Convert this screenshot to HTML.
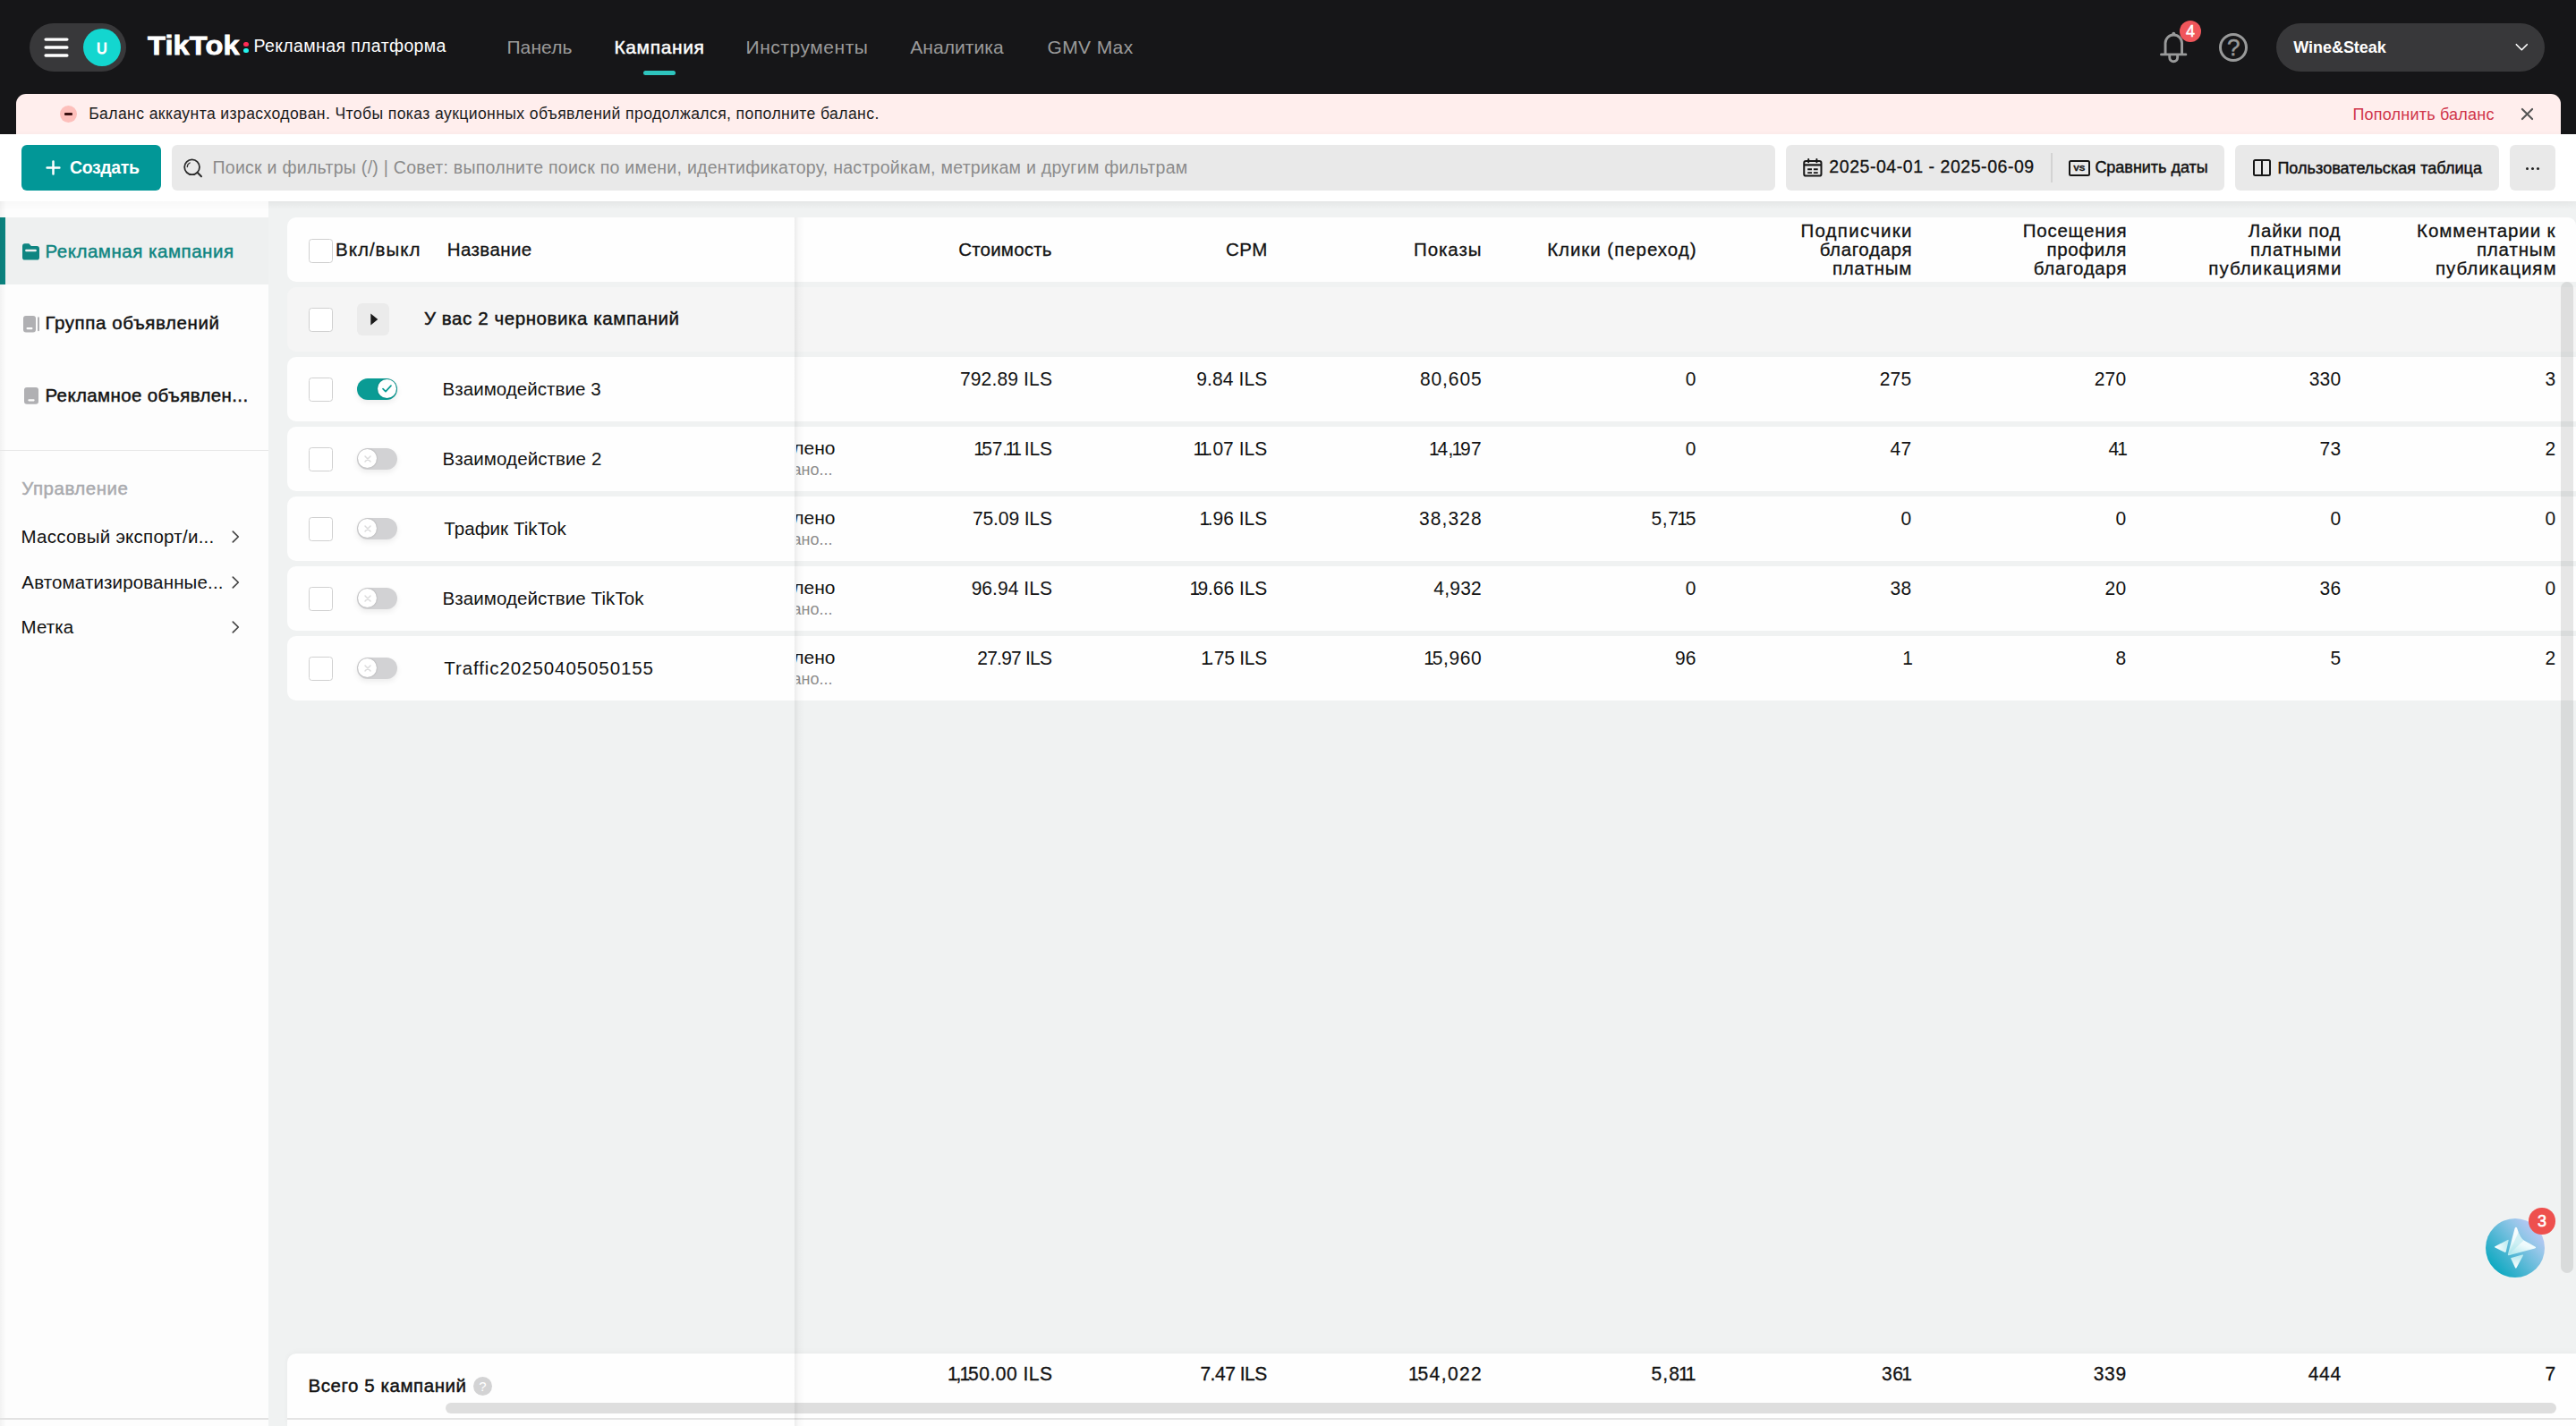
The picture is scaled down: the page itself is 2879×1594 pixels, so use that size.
<!DOCTYPE html>
<html lang="ru">
<head>
<meta charset="utf-8">
<title>TikTok: Рекламная платформа — Кампания</title>
<style>
*{box-sizing:border-box;margin:0;padding:0}
html,body{width:2879px;height:1594px;overflow:hidden}
body{position:relative;background:#f0f2f2;font-family:"Liberation Sans",sans-serif;color:#121212}
.a{position:absolute}
.t{position:absolute;white-space:nowrap;line-height:1;font-kerning:normal}
svg{position:absolute;overflow:visible}
.nav{left:0;top:0;width:2879px;height:150px;background:#161618}
.pill{background:#38383a;border-radius:27px;height:54px;top:26px}
.alert{left:18px;top:105px;width:2844px;height:45px;background:#ffeeed;border-radius:11px 11px 0 0}
.bar{left:0;top:150px;width:2879px;height:75px;background:#fff;box-shadow:0 2px 8px rgba(0,0,0,.045)}
.btn{top:162px;height:51px;border-radius:6px;background:#e9e9e9}
.side{left:0;top:225px;width:300px;height:1369px;background:#fdfdfd}
.row{left:321px;width:2558px;height:71.5px;background:#fefefe;border-radius:10px 0 0 10px}
.cb{left:345px;width:27px;height:27px;border:1.5px solid #d0d0d0;border-radius:3.5px;background:#fff}
.tg{left:398.75px;width:45px;height:24px;border-radius:12px;box-shadow:0 3px 6px rgba(0,0,0,.07)}
.tg.on{background:#0a9b94}
.tg.off{background:#d2d2d4}
.kn{position:absolute;top:1.5px;width:21px;height:21px;border-radius:50%;background:#fff;box-shadow:0 0 2px rgba(0,0,0,.25)}
.t i{font-style:normal;margin:0 -2.6px 0 -2.3px}
.clip{left:890.3px;width:67.7px;height:60px;overflow:hidden}
</style>
</head>
<body>
<!-- top navigation -->
<div class="a nav"></div>
<div class="a pill" style="left:33px;width:107.5px"></div>
<svg style="left:40px;top:34px" width="50" height="40" viewBox="40 34 50 40"><path d="M51.1 44.1H74.9M51.1 53H74.9M51.1 62H74.9" stroke="#fff" stroke-width="3.4" stroke-linecap="round" fill="none"/></svg>
<div class="a" style="left:93px;top:32px;width:42px;height:42px;border-radius:50%;background:#13d6cf"></div>
<span class="t" style="left:107.9px;top:46.1px;font-size:16.2px;color:#fff;-webkit-text-stroke:1px #fff">U</span>
<div class="a" style="left:272.2px;top:46.6px;width:5.4px;height:5.4px;border-radius:50%;background:#fe2c55"></div>
<div class="a" style="left:272.2px;top:53.8px;width:5.4px;height:5.4px;border-radius:50%;background:#25f4ee"></div>
<div class="a" style="left:719px;top:78.8px;width:36px;height:5.6px;border-radius:3px;background:#2ec4bd"></div>
<!-- bell -->
<svg style="left:2400px;top:14px" width="60" height="70" viewBox="2400 14 60 70"><path d="M2415.5 60.9H2442.9M2420.05 60.5V48.3A9.25 9.25 0 0 1 2438.55 48.3V60.5M2424.75 62.4V64.3A4.45 4.45 0 0 0 2433.65 64.3V62.4" stroke="#999a9a" stroke-width="2.9" fill="none" stroke-linecap="round"/><circle cx="2429.3" cy="37.6" r="1.9" fill="#999a9a"/></svg>
<div class="a" style="left:2436.05px;top:22.75px;width:24.1px;height:24.1px;border-radius:50%;background:#f0565b"></div>
<span class="t" style="left:2443.1px;top:25.6px;font-size:18px;color:#fff;-webkit-text-stroke:.5px #fff">4</span>
<!-- help -->
<div class="a" style="left:2480.1px;top:37px;width:32px;height:32px;border-radius:50%;border:3px solid #999a9a"></div>
<span class="t" style="left:2488.9px;top:40.4px;font-size:26px;color:#999a9a;-webkit-text-stroke:.5px #999a9a">?</span>
<div class="a pill" style="left:2543.7px;width:300.5px"></div>
<svg style="left:2810px;top:48px" width="16" height="10" viewBox="0 0 16 10"><path d="M2.3 1.7L8.3 7.7L14.3 1.7" stroke="#fff" stroke-width="1.6" fill="none" stroke-linecap="round" stroke-linejoin="round"/></svg>
<!-- alert banner -->
<div class="a alert"></div>
<div class="a" style="left:67px;top:118px;width:19px;height:19px;border-radius:50%;background:#fdbfbb"></div>
<div class="a" style="left:72.3px;top:126.4px;width:8.4px;height:2.2px;background:#3a1010;border-radius:1px"></div>
<svg style="left:2817px;top:120px" width="15" height="15" viewBox="0 0 15 15"><path d="M1.9 1.9L13.1 13.1M13.1 1.9L1.9 13.1" stroke="#555" stroke-width="2.1" stroke-linecap="round"/></svg>
<!-- toolbar -->
<div class="a bar"></div>
<div class="a btn" style="left:24px;width:156px;background:#029797"></div>
<svg style="left:51.4px;top:179.3px" width="17" height="17" viewBox="0 0 17 17"><path d="M8.5 1.6V15.4M1.6 8.5H15.4" stroke="#fff" stroke-width="2.5" stroke-linecap="round"/></svg>
<div class="a btn" style="left:192px;width:1792px"></div>
<svg style="left:204px;top:176px" width="24" height="24" viewBox="0 0 24 24"><circle cx="10.6" cy="10.8" r="8.4" stroke="#2b2b2b" stroke-width="1.8" fill="none"/><path d="M16.8 17L21 21.2" stroke="#2b2b2b" stroke-width="2" stroke-linecap="round"/><path d="M5.3 10.6A5.2 5.2 0 0 1 8.2 6" stroke="#2b2b2b" stroke-width="1.3" fill="none" stroke-linecap="round"/></svg>
<div class="a btn" style="left:1996px;width:490px"></div>
<!-- calendar -->
<svg style="left:2010px;top:172px" width="32" height="30" viewBox="2010 172 32 30"><rect x="2016.25" y="180" width="19.25" height="16.6" rx="2.2" stroke="#161616" stroke-width="2" fill="none"/><path d="M2016 184.4H2036" stroke="#161616" stroke-width="2.2"/><path d="M2021.2 178V181.2M2030.4 178V181.2" stroke="#161616" stroke-width="2" stroke-linecap="round"/><path d="M2020.2 189.2H2025M2026.9 189.2H2031.7M2020.2 193.1H2025M2026.9 193.1H2031.7" stroke="#161616" stroke-width="1.9"/></svg>
<div class="a" style="left:2292px;top:171px;width:1.5px;height:33px;background:#d3d3d3"></div>
<!-- vs -->
<div class="a" style="left:2312px;top:178.9px;width:23.8px;height:18px;border:2px solid #161616;border-radius:2.5px"></div>
<span class="t" style="left:2317.2px;top:183.2px;font-size:9.8px;font-weight:700;color:#161616;letter-spacing:0;-webkit-text-stroke:.35px #161616">VS</span>
<div class="a btn" style="left:2498px;width:295px"></div>
<div class="a" style="left:2518.3px;top:178.3px;width:19.6px;height:19.2px;border:2.1px solid #161616;border-radius:2.5px"></div>
<div class="a" style="left:2527.1px;top:178.3px;width:2.1px;height:19.2px;background:#161616"></div>
<div class="a btn" style="left:2805px;width:51px"></div>
<div class="a" style="left:2823.3px;top:186.6px;width:3px;height:3px;border-radius:50%;background:#222;box-shadow:6px 0 0 #222,12px 0 0 #222"></div>
<!-- sidebar -->
<div class="a side"></div>
<div class="a" style="left:0;top:225px;width:2879px;height:10px;background:linear-gradient(rgba(0,0,0,.02),rgba(0,0,0,0))"></div>
<div class="a" style="left:0;top:243px;width:300px;height:74.5px;background:#eef0f0"></div>
<div class="a" style="left:0;top:243px;width:6px;height:74.5px;background:#0b8480"></div>
<div class="a" style="left:0;top:225px;width:7px;height:1369px;background:linear-gradient(90deg,rgba(0,0,0,.045),rgba(0,0,0,0))"></div>
<!-- folder icon -->
<svg style="left:25px;top:271.5px" width="19" height="19" viewBox="0 0 19 19"><path d="M0 3.2Q0 0.3 2.9 0.3H7.3L9.9 3.1H16.1Q19 3.1 19 6V15.7Q19 18.6 16.1 18.6H2.9Q0 18.6 0 15.7Z" fill="#0e8581"/><rect x="3.2" y="6.8" width="12.6" height="2.4" rx="1" fill="#eef0f0"/></svg>
<svg style="left:26px;top:352.5px" width="19" height="19" viewBox="0 0 19 19"><rect x="0" y="0" width="14" height="18.4" rx="3" fill="#b0b0b3"/><rect x="3.6" y="13" width="6.8" height="2.2" rx="0.8" fill="#fdfdfd"/><rect x="16" y="1.2" width="2" height="16" rx="1" fill="#b0b0b3"/></svg>
<svg style="left:26.5px;top:433px" width="17" height="19" viewBox="0 0 17 19"><rect x="0" y="0" width="16" height="18.8" rx="3" fill="#b0b0b3"/><rect x="4.4" y="13.2" width="7.2" height="2.2" rx="0.8" fill="#fdfdfd"/></svg>
<div class="a" style="left:0;top:503.2px;width:300px;height:1.3px;background:#e7e7e7"></div>
<svg style="left:259px;top:593px" width="9" height="14" viewBox="0 0 9 14"><path d="M1.3 1.2L7.3 7L1.3 12.8" stroke="#444" stroke-width="1.7" fill="none" stroke-linecap="round" stroke-linejoin="round"/></svg>
<svg style="left:259px;top:643.8px" width="9" height="14" viewBox="0 0 9 14"><path d="M1.3 1.2L7.3 7L1.3 12.8" stroke="#444" stroke-width="1.7" fill="none" stroke-linecap="round" stroke-linejoin="round"/></svg>
<svg style="left:259px;top:694.3px" width="9" height="14" viewBox="0 0 9 14"><path d="M1.3 1.2L7.3 7L1.3 12.8" stroke="#444" stroke-width="1.7" fill="none" stroke-linecap="round" stroke-linejoin="round"/></svg>
<div class="a" style="left:0;top:1585.4px;width:300px;height:1.4px;background:#e2e2e2"></div>
<!-- table header -->
<div class="a" style="left:321px;top:243px;width:2558px;height:72px;background:#fefefe;border-radius:10px 9px 0 10px"></div>
<!-- draft row -->
<div class="a row" style="top:321.2px;height:71.6px;background:#f5f5f5"></div>
<div class="a cb" style="top:267px"></div>
<div class="a cb" style="top:343.5px"></div>
<div class="a" style="left:399px;top:339px;width:36px;height:36px;border-radius:6px;background:#ebebeb"></div>
<svg style="left:414px;top:350px" width="9" height="14" viewBox="0 0 9 14"><path d="M0.3 0.4L8.3 7L0.3 13.6Z" fill="#1a1a1a"/></svg>
<div class="a row" style="top:399.25px"></div>
<div class="a cb" style="top:421.75px"></div>
<div class="a tg on" style="top:422.85px"><div class="kn" style="left:23px"></div><svg style="left:28.3px;top:7.4px" width="11" height="9" viewBox="0 0 11 9"><path d="M1 4.6L4 7.6L10 1.2" stroke="#0a9b94" stroke-width="1.7" fill="none" stroke-linecap="round" stroke-linejoin="round"/></svg></div>
<div class="a row" style="top:477.25px"></div>
<div class="a cb" style="top:499.75px"></div>
<div class="a tg off" style="top:500.85px"><div class="kn" style="left:1.5px"></div><svg style="left:8.2px;top:8.2px" width="8" height="8" viewBox="0 0 8 8"><path d="M1 1L7 7M7 1L1 7" stroke="#dcdcdd" stroke-width="1.5" stroke-linecap="round"/></svg></div>
<div class="a clip" style="top:477.25px"><span class="t" style="right:24.5px;top:13.22px;font-size:21px">Приостановлено</span><span class="t" style="right:27.5px;top:38.76px;font-size:18px;color:#8c8c8c">Кампания приостано...</span></div>
<div class="a row" style="top:555.25px"></div>
<div class="a cb" style="top:577.75px"></div>
<div class="a tg off" style="top:578.85px"><div class="kn" style="left:1.5px"></div><svg style="left:8.2px;top:8.2px" width="8" height="8" viewBox="0 0 8 8"><path d="M1 1L7 7M7 1L1 7" stroke="#dcdcdd" stroke-width="1.5" stroke-linecap="round"/></svg></div>
<div class="a clip" style="top:555.25px"><span class="t" style="right:24.5px;top:13.22px;font-size:21px">Приостановлено</span><span class="t" style="right:27.5px;top:38.76px;font-size:18px;color:#8c8c8c">Кампания приостано...</span></div>
<div class="a row" style="top:633.25px"></div>
<div class="a cb" style="top:655.75px"></div>
<div class="a tg off" style="top:656.85px"><div class="kn" style="left:1.5px"></div><svg style="left:8.2px;top:8.2px" width="8" height="8" viewBox="0 0 8 8"><path d="M1 1L7 7M7 1L1 7" stroke="#dcdcdd" stroke-width="1.5" stroke-linecap="round"/></svg></div>
<div class="a clip" style="top:633.25px"><span class="t" style="right:24.5px;top:13.22px;font-size:21px">Приостановлено</span><span class="t" style="right:27.5px;top:38.76px;font-size:18px;color:#8c8c8c">Кампания приостано...</span></div>
<div class="a row" style="top:711.25px"></div>
<div class="a cb" style="top:733.75px"></div>
<div class="a tg off" style="top:734.85px"><div class="kn" style="left:1.5px"></div><svg style="left:8.2px;top:8.2px" width="8" height="8" viewBox="0 0 8 8"><path d="M1 1L7 7M7 1L1 7" stroke="#dcdcdd" stroke-width="1.5" stroke-linecap="round"/></svg></div>
<div class="a clip" style="top:711.25px"><span class="t" style="right:24.5px;top:13.22px;font-size:21px">Приостановлено</span><span class="t" style="right:27.5px;top:38.76px;font-size:18px;color:#8c8c8c">Кампания приостано...</span></div>
<!-- footer -->
<div class="a" style="left:321px;top:1513px;width:2558px;height:81px;background:#fefefe;border-radius:10px 0 0 0;box-shadow:0 -2px 6px rgba(0,0,0,.03)"></div>
<div class="a" style="left:321px;top:1585.4px;width:2558px;height:1.4px;background:#e4e4e4"></div>
<div class="a" style="left:498px;top:1567.5px;width:2358.7px;height:12.5px;border-radius:6.3px;background:#dedede"></div>
<div class="a" style="left:529px;top:1539.3px;width:21px;height:21px;border-radius:50%;background:#d3d3d4"></div>
<span class="t" style="left:535.3px;top:1541.6px;font-size:15px;color:#fff">?</span>
<!-- sticky column shadow -->
<div class="a" style="left:888px;top:243px;width:12px;height:1351px;background:linear-gradient(90deg,rgba(0,0,0,.07),rgba(0,0,0,.022) 38%,rgba(0,0,0,.008) 70%,rgba(0,0,0,0))"></div>
<!-- vertical scrollbar -->
<div class="a" style="left:2862.3px;top:315.3px;width:13.8px;height:1108px;border-radius:7px;background:rgba(0,0,0,.095)"></div>
<!-- assistant -->
<div class="a" style="left:2777.9px;top:1362.1px;width:66px;height:66px;border-radius:50%;background:linear-gradient(48deg,#04a7be 10%,#4db6d3 40%,#93c6e8 68%,#cdc9fb 94%)"></div>
<svg style="left:2777.9px;top:1362.1px" width="66" height="66" viewBox="0 0 66 66"><defs><linearGradient id="g1" x1="0.3" y1="1" x2="0.7" y2="0"><stop offset="0" stop-color="#b4e9ee"/><stop offset=".4" stop-color="#eefafc"/><stop offset="1" stop-color="#ffffff"/></linearGradient><linearGradient id="g2" x1="1" y1="0.4" x2="0" y2="0.6"><stop offset="0" stop-color="#bfecf1"/><stop offset="1" stop-color="#ffffff"/></linearGradient><linearGradient id="g3" x1="0.5" y1="0" x2="0.5" y2="1"><stop offset="0" stop-color="#b5e8ee"/><stop offset="1" stop-color="#ffffff"/></linearGradient></defs>
<path d="M32.6 11Q33.9 8.6 35.2 11Q38.6 22.6 43.2 24.8Q48 27.4 55.2 31.4Q57.2 32.6 55 33.4L26 41.2Q24.6 41.4 24.9 40Z" fill="url(#g1)"/>
<path d="M25.6 40.6L42.6 24.4Q39.4 22.4 36.6 15.4Z" fill="#9fe0e8" opacity=".4"/>
<path d="M10.6 32.6Q9.4 31.9 10.6 31.2L24.6 23.9Q25.9 23.4 25.6 24.8L22.8 37Q22.4 38.3 21.2 37.7Z" fill="url(#g2)"/>
<path d="M28.4 45.2Q27.6 44.2 28.8 43.9L41 40.6Q42.5 40.3 41.9 41.6L34.6 55Q33.8 56.3 33 55Z" fill="url(#g3)"/></svg>
<div class="a" style="left:2826.3px;top:1350.2px;width:29.6px;height:29.6px;border-radius:50%;background:#ee504e"></div>
<span class="t" style="left:2835.9px;top:1356.2px;font-size:18px;color:#fff;-webkit-text-stroke:.6px #fff">3</span>
<!-- text -->
<span class="t" id="t0" style="font-size:29.5px;top:36.28px;color:#fff;font-weight:700;-webkit-text-stroke:.8px #fff;left:165.4px;transform:scaleX(1.104);transform-origin:0 50%;letter-spacing:.1px;">TikTok</span>
<span class="t" id="t1" style="font-size:19.5px;top:42.49px;color:#fff;letter-spacing:0.380px;left:283.40px;">Рекламная платформа</span>
<span class="t" id="t2" style="font-size:21px;top:42.22px;color:#9b9b9b;letter-spacing:0.086px;left:566.45px;">Панель</span>
<span class="t" id="t3" style="font-size:21px;top:42.22px;color:#fff;-webkit-text-stroke:0.45px #fff;letter-spacing:0.614px;left:686.48px;">Кампания</span>
<span class="t" id="t4" style="font-size:21px;top:42.22px;color:#9b9b9b;letter-spacing:0.544px;left:833.50px;">Инструменты</span>
<span class="t" id="t5" style="font-size:21px;top:42.22px;color:#9b9b9b;letter-spacing:0.050px;left:1017.30px;">Аналитика</span>
<span class="t" id="t6" style="font-size:21px;top:42.22px;color:#9b9b9b;letter-spacing:0.394px;left:1170.45px;">GMV Max</span>
<span class="t" id="t7" style="font-size:18px;top:44.01px;color:#fff;font-weight:700;letter-spacing:-0.040px;left:2563.25px;">Wine&amp;Steak</span>
<span class="t" id="t8" style="font-size:17.6px;top:119.10px;color:#1c1c1c;letter-spacing:0.385px;left:99.19px;">Баланс аккаунта израсходован. Чтобы показ аукционных объявлений продолжался, пополните баланс.</span>
<span class="t" id="t9" style="font-size:18px;top:119.01px;color:#d0364b;letter-spacing:0.209px;left:2629.47px;">Пополнить баланс</span>
<span class="t" id="t10" style="font-size:19.5px;top:177.99px;color:#fff;font-weight:700;letter-spacing:-0.340px;left:77.93px;">Создать</span>
<span class="t" id="t11" style="font-size:19.5px;top:178.49px;color:#8b8b8b;letter-spacing:0.279px;left:237.47px;">Поиск и фильтры (/) | Совет: выполните поиск по имени, идентификатору, настройкам, метрикам и другим фильтрам</span>
<span class="t" id="t12" style="font-size:19.5px;top:176.69px;color:#121212;-webkit-text-stroke:0.3px #121212;letter-spacing:0.547px;left:2044.35px;">2025-04-01 - 2025-06-09</span>
<span class="t" id="t13" style="font-size:18px;top:178.26px;color:#121212;-webkit-text-stroke:0.45px #121212;letter-spacing:-0.019px;left:2341.40px;">Сравнить даты</span>
<span class="t" id="t14" style="font-size:18px;top:178.51px;color:#121212;-webkit-text-stroke:0.45px #121212;letter-spacing:0.056px;left:2545.38px;">Пользовательская таблица</span>
<span class="t" id="t15" style="font-size:20.5px;top:270.65px;color:#0e8581;-webkit-text-stroke:0.45px #0e8581;letter-spacing:0.522px;left:50.48px;">Рекламная кампания</span>
<span class="t" id="t16" style="font-size:20.5px;top:351.40px;color:#121212;-webkit-text-stroke:0.45px #121212;letter-spacing:0.591px;left:50.48px;">Группа объявлений</span>
<span class="t" id="t17" style="font-size:20.5px;top:431.90px;color:#121212;-webkit-text-stroke:0.45px #121212;letter-spacing:0.371px;left:50.48px;">Рекламное объявлен...</span>
<span class="t" id="t18" style="font-size:20.5px;top:535.65px;color:#a9aaae;-webkit-text-stroke:0.45px #a9aaae;letter-spacing:0.523px;left:24.32px;">Управление</span>
<span class="t" id="t19" style="font-size:20.5px;top:589.65px;color:#121212;letter-spacing:0.261px;left:23.45px;">Массовый экспорт/и...</span>
<span class="t" id="t20" style="font-size:20.5px;top:640.65px;color:#121212;letter-spacing:0.149px;left:24.32px;">Автоматизированные...</span>
<span class="t" id="t21" style="font-size:20.5px;top:690.90px;color:#121212;letter-spacing:0.150px;left:23.45px;">Метка</span>
<span class="t" id="t22" style="font-size:20.5px;top:269.25px;color:#121212;-webkit-text-stroke:0.3px #121212;letter-spacing:1.014px;left:375.03px;">Вкл/выкл</span>
<span class="t" id="t23" style="font-size:20.5px;top:268.65px;color:#121212;-webkit-text-stroke:0.3px #121212;letter-spacing:0.393px;left:499.82px;">Название</span>
<span class="t" id="t24" style="font-size:20.5px;top:268.90px;color:#121212;-webkit-text-stroke:0.3px #121212;letter-spacing:0.207px;right:1703.29px;">Стоимость</span>
<span class="t" id="t25" style="font-size:20.5px;top:268.90px;color:#121212;-webkit-text-stroke:0.3px #121212;letter-spacing:0.479px;right:1462.07px;">CPM</span>
<span class="t" id="t26" style="font-size:20.5px;top:268.90px;color:#121212;-webkit-text-stroke:0.3px #121212;letter-spacing:0.933px;right:1222.57px;">Показы</span>
<span class="t" id="t27" style="font-size:20.5px;top:268.90px;color:#121212;-webkit-text-stroke:0.3px #121212;letter-spacing:0.960px;right:982.57px;">Клики (переход)</span>
<span class="t" id="t28" style="font-size:20.5px;top:248.25px;color:#121212;-webkit-text-stroke:0.3px #121212;letter-spacing:1.255px;right:741.27px;">Подписчики</span>
<span class="t" id="t29" style="font-size:20.5px;top:269.25px;color:#121212;-webkit-text-stroke:0.3px #121212;letter-spacing:0.631px;right:741.89px;">благодаря</span>
<span class="t" id="t30" style="font-size:20.5px;top:290.15px;color:#121212;-webkit-text-stroke:0.3px #121212;letter-spacing:0.839px;right:741.69px;">платным</span>
<span class="t" id="t31" style="font-size:20.5px;top:248.25px;color:#121212;-webkit-text-stroke:0.3px #121212;letter-spacing:0.741px;right:501.78px;">Посещения</span>
<span class="t" id="t32" style="font-size:20.5px;top:269.25px;color:#121212;-webkit-text-stroke:0.3px #121212;letter-spacing:0.596px;right:501.93px;">профиля</span>
<span class="t" id="t33" style="font-size:20.5px;top:290.15px;color:#121212;-webkit-text-stroke:0.3px #121212;letter-spacing:0.734px;right:501.79px;">благодаря</span>
<span class="t" id="t34" style="font-size:20.5px;top:248.25px;color:#121212;-webkit-text-stroke:0.3px #121212;letter-spacing:0.804px;right:262.62px;">Лайки под</span>
<span class="t" id="t35" style="font-size:20.5px;top:269.25px;color:#121212;-webkit-text-stroke:0.3px #121212;letter-spacing:0.925px;right:261.60px;">платными</span>
<span class="t" id="t36" style="font-size:20.5px;top:290.15px;color:#121212;-webkit-text-stroke:0.3px #121212;letter-spacing:1.069px;right:261.46px;">публикациями</span>
<span class="t" id="t37" style="font-size:20.5px;top:248.25px;color:#121212;-webkit-text-stroke:0.3px #121212;letter-spacing:0.894px;right:22.53px;">Комментарии к</span>
<span class="t" id="t38" style="font-size:20.5px;top:269.25px;color:#121212;-webkit-text-stroke:0.3px #121212;letter-spacing:0.839px;right:21.69px;">платным</span>
<span class="t" id="t39" style="font-size:20.5px;top:290.15px;color:#121212;-webkit-text-stroke:0.3px #121212;letter-spacing:0.944px;right:21.58px;">публикациям</span>
<span class="t" id="t40" style="font-size:20.5px;top:346.40px;color:#121212;-webkit-text-stroke:0.45px #121212;letter-spacing:0.583px;left:473.98px;">У вас 2 черновика кампаний</span>
<span class="t" id="t41" style="font-size:20.5px;top:424.50px;color:#121212;letter-spacing:0.062px;left:494.48px;">Взаимодействие 3</span>
<span class="t" id="t42" style="font-size:21px;top:412.67px;color:#121212;transform:scaleY(1.075);transform-origin:50% 84.65%;letter-spacing:0.160px;right:1702.92px;">792.89 ILS</span>
<span class="t" id="t43" style="font-size:21px;top:412.67px;color:#121212;transform:scaleY(1.075);transform-origin:50% 84.65%;letter-spacing:0.132px;right:1462.58px;">9.84 ILS</span>
<span class="t" id="t44" style="font-size:21px;top:412.67px;color:#121212;transform:scaleY(1.075);transform-origin:50% 84.65%;letter-spacing:0.912px;right:1222.38px;">80,605</span>
<span class="t" id="t45" style="font-size:21px;top:412.67px;color:#121212;transform:scaleY(1.075);transform-origin:50% 84.65%;letter-spacing:0.231px;right:983.27px;">0</span>
<span class="t" id="t46" style="font-size:21px;top:412.67px;color:#121212;transform:scaleY(1.075);transform-origin:50% 84.65%;letter-spacing:0.231px;right:742.64px;">275</span>
<span class="t" id="t47" style="font-size:21px;top:412.67px;color:#121212;transform:scaleY(1.075);transform-origin:50% 84.65%;letter-spacing:0.231px;right:502.64px;">270</span>
<span class="t" id="t48" style="font-size:21px;top:412.67px;color:#121212;transform:scaleY(1.075);transform-origin:50% 84.65%;letter-spacing:0.231px;right:262.64px;">330</span>
<span class="t" id="t49" style="font-size:21px;top:412.67px;color:#121212;transform:scaleY(1.075);transform-origin:50% 84.65%;letter-spacing:0.231px;right:22.64px;">3</span>
<span class="t" id="t50" style="font-size:20.5px;top:502.50px;color:#121212;letter-spacing:0.106px;left:494.48px;">Взаимодействие 2</span>
<span class="t" id="t51" style="font-size:21px;top:490.67px;color:#121212;transform:scaleY(1.075);transform-origin:50% 84.65%;letter-spacing:-0.170px;right:1703.25px;"><i>1</i>57.<i>1</i><i>1</i> ILS</span>
<span class="t" id="t52" style="font-size:21px;top:490.67px;color:#121212;transform:scaleY(1.075);transform-origin:50% 84.65%;letter-spacing:0.040px;right:1462.67px;"><i>1</i><i>1</i>.07 ILS</span>
<span class="t" id="t53" style="font-size:21px;top:490.67px;color:#121212;transform:scaleY(1.075);transform-origin:50% 84.65%;letter-spacing:0.386px;right:1222.90px;"><i>1</i>4,<i>1</i>97</span>
<span class="t" id="t54" style="font-size:21px;top:490.67px;color:#121212;transform:scaleY(1.075);transform-origin:50% 84.65%;letter-spacing:0.231px;right:983.27px;">0</span>
<span class="t" id="t55" style="font-size:21px;top:490.67px;color:#121212;transform:scaleY(1.075);transform-origin:50% 84.65%;letter-spacing:0.231px;right:742.64px;">47</span>
<span class="t" id="t56" style="font-size:21px;top:490.67px;color:#121212;transform:scaleY(1.075);transform-origin:50% 84.65%;letter-spacing:0.231px;right:503.44px;">4<i>1</i></span>
<span class="t" id="t57" style="font-size:21px;top:490.67px;color:#121212;transform:scaleY(1.075);transform-origin:50% 84.65%;letter-spacing:0.231px;right:262.64px;">73</span>
<span class="t" id="t58" style="font-size:21px;top:490.67px;color:#121212;transform:scaleY(1.075);transform-origin:50% 84.65%;letter-spacing:0.231px;right:22.64px;">2</span>
<span class="t" id="t59" style="font-size:20.5px;top:580.50px;color:#121212;letter-spacing:0.067px;left:496.27px;">Трафик TikTok</span>
<span class="t" id="t60" style="font-size:21px;top:568.67px;color:#121212;transform:scaleY(1.075);transform-origin:50% 84.65%;letter-spacing:-0.122px;right:1703.20px;">75.09 ILS</span>
<span class="t" id="t61" style="font-size:21px;top:568.67px;color:#121212;transform:scaleY(1.075);transform-origin:50% 84.65%;letter-spacing:0.013px;right:1462.70px;"><i>1</i>.96 ILS</span>
<span class="t" id="t62" style="font-size:21px;top:568.67px;color:#121212;transform:scaleY(1.075);transform-origin:50% 84.65%;letter-spacing:1.075px;right:1222.22px;">38,328</span>
<span class="t" id="t63" style="font-size:21px;top:568.67px;color:#121212;transform:scaleY(1.075);transform-origin:50% 84.65%;letter-spacing:0.562px;right:982.94px;">5,7<i>1</i>5</span>
<span class="t" id="t64" style="font-size:21px;top:568.67px;color:#121212;transform:scaleY(1.075);transform-origin:50% 84.65%;letter-spacing:0.231px;right:742.64px;">0</span>
<span class="t" id="t65" style="font-size:21px;top:568.67px;color:#121212;transform:scaleY(1.075);transform-origin:50% 84.65%;letter-spacing:0.231px;right:502.64px;">0</span>
<span class="t" id="t66" style="font-size:21px;top:568.67px;color:#121212;transform:scaleY(1.075);transform-origin:50% 84.65%;letter-spacing:0.231px;right:262.64px;">0</span>
<span class="t" id="t67" style="font-size:21px;top:568.67px;color:#121212;transform:scaleY(1.075);transform-origin:50% 84.65%;letter-spacing:0.231px;right:22.64px;">0</span>
<span class="t" id="t68" style="font-size:20.5px;top:658.50px;color:#121212;letter-spacing:0.086px;left:494.48px;">Взаимодействие TikTok</span>
<span class="t" id="t69" style="font-size:21px;top:646.67px;color:#121212;transform:scaleY(1.075);transform-origin:50% 84.65%;letter-spacing:0.048px;right:1703.03px;">96.94 ILS</span>
<span class="t" id="t70" style="font-size:21px;top:646.67px;color:#121212;transform:scaleY(1.075);transform-origin:50% 84.65%;letter-spacing:-0.055px;right:1462.76px;"><i>1</i>9.66 ILS</span>
<span class="t" id="t71" style="font-size:21px;top:646.67px;color:#121212;transform:scaleY(1.075);transform-origin:50% 84.65%;letter-spacing:0.227px;right:1223.06px;">4,932</span>
<span class="t" id="t72" style="font-size:21px;top:646.67px;color:#121212;transform:scaleY(1.075);transform-origin:50% 84.65%;letter-spacing:0.231px;right:983.27px;">0</span>
<span class="t" id="t73" style="font-size:21px;top:646.67px;color:#121212;transform:scaleY(1.075);transform-origin:50% 84.65%;letter-spacing:0.231px;right:742.64px;">38</span>
<span class="t" id="t74" style="font-size:21px;top:646.67px;color:#121212;transform:scaleY(1.075);transform-origin:50% 84.65%;letter-spacing:0.231px;right:502.64px;">20</span>
<span class="t" id="t75" style="font-size:21px;top:646.67px;color:#121212;transform:scaleY(1.075);transform-origin:50% 84.65%;letter-spacing:0.231px;right:262.64px;">36</span>
<span class="t" id="t76" style="font-size:21px;top:646.67px;color:#121212;transform:scaleY(1.075);transform-origin:50% 84.65%;letter-spacing:0.231px;right:22.64px;">0</span>
<span class="t" id="t77" style="font-size:20.5px;top:736.50px;color:#121212;letter-spacing:0.915px;left:496.27px;">Traffic20250405050155</span>
<span class="t" id="t78" style="font-size:21px;top:724.67px;color:#121212;transform:scaleY(1.075);transform-origin:50% 84.65%;letter-spacing:-0.783px;right:1703.86px;">27.97 ILS</span>
<span class="t" id="t79" style="font-size:21px;top:724.67px;color:#121212;transform:scaleY(1.075);transform-origin:50% 84.65%;letter-spacing:-0.226px;right:1462.94px;"><i>1</i>.75 ILS</span>
<span class="t" id="t80" style="font-size:21px;top:724.67px;color:#121212;transform:scaleY(1.075);transform-origin:50% 84.65%;letter-spacing:0.571px;right:1222.72px;"><i>1</i>5,960</span>
<span class="t" id="t81" style="font-size:21px;top:724.67px;color:#121212;transform:scaleY(1.075);transform-origin:50% 84.65%;letter-spacing:0.231px;right:983.27px;">96</span>
<span class="t" id="t82" style="font-size:21px;top:724.67px;color:#121212;transform:scaleY(1.075);transform-origin:50% 84.65%;letter-spacing:0.231px;right:743.44px;"><i>1</i></span>
<span class="t" id="t83" style="font-size:21px;top:724.67px;color:#121212;transform:scaleY(1.075);transform-origin:50% 84.65%;letter-spacing:0.231px;right:502.64px;">8</span>
<span class="t" id="t84" style="font-size:21px;top:724.67px;color:#121212;transform:scaleY(1.075);transform-origin:50% 84.65%;letter-spacing:0.231px;right:262.64px;">5</span>
<span class="t" id="t85" style="font-size:21px;top:724.67px;color:#121212;transform:scaleY(1.075);transform-origin:50% 84.65%;letter-spacing:0.231px;right:22.64px;">2</span>
<span class="t" id="t86" style="font-size:20.5px;top:1539.40px;color:#121212;-webkit-text-stroke:0.45px #121212;letter-spacing:0.560px;left:344.48px;">Всего 5 кампаний</span>
<span class="t" id="t87" style="font-size:21px;top:1525.12px;color:#121212;transform:scaleY(1.075);transform-origin:50% 84.65%;-webkit-text-stroke:0.3px #121212;letter-spacing:0.492px;right:1702.59px;"><i>1</i>,<i>1</i>50.00 ILS</span>
<span class="t" id="t88" style="font-size:21px;top:1525.12px;color:#121212;transform:scaleY(1.075);transform-origin:50% 84.65%;-webkit-text-stroke:0.3px #121212;letter-spacing:-0.474px;right:1463.18px;">7.47 ILS</span>
<span class="t" id="t89" style="font-size:21px;top:1525.12px;color:#121212;transform:scaleY(1.075);transform-origin:50% 84.65%;-webkit-text-stroke:0.3px #121212;letter-spacing:1.392px;right:1221.90px;"><i>1</i>54,022</span>
<span class="t" id="t90" style="font-size:21px;top:1525.12px;color:#121212;transform:scaleY(1.075);transform-origin:50% 84.65%;-webkit-text-stroke:0.3px #121212;letter-spacing:1.141px;right:984.96px;">5,8<i>1</i><i>1</i></span>
<span class="t" id="t91" style="font-size:21px;top:1525.12px;color:#121212;transform:scaleY(1.075);transform-origin:50% 84.65%;-webkit-text-stroke:0.3px #121212;letter-spacing:0.688px;right:743.88px;">36<i>1</i></span>
<span class="t" id="t92" style="font-size:21px;top:1525.12px;color:#121212;transform:scaleY(1.075);transform-origin:50% 84.65%;-webkit-text-stroke:0.3px #121212;letter-spacing:0.688px;right:502.18px;">339</span>
<span class="t" id="t93" style="font-size:21px;top:1525.12px;color:#121212;transform:scaleY(1.075);transform-origin:50% 84.65%;-webkit-text-stroke:0.3px #121212;letter-spacing:0.688px;right:262.18px;">444</span>
<span class="t" id="t94" style="font-size:21px;top:1525.12px;color:#121212;transform:scaleY(1.075);transform-origin:50% 84.65%;-webkit-text-stroke:0.3px #121212;letter-spacing:0.688px;right:22.18px;">7</span>
</body>
</html>
